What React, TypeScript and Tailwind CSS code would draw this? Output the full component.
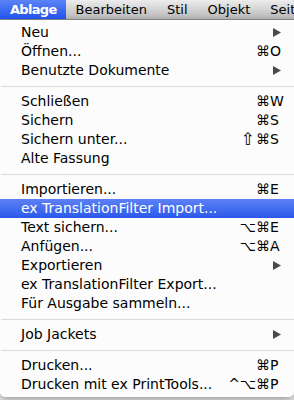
import React from 'react';

type Item =
  | { type: 'sep' }
  | { type: 'item'; label: string; mods?: string; keyChar?: string; submenu?: boolean; selected?: boolean };

const menuItems: Item[] = [
  { type: 'item', label: 'Neu', submenu: true },
  { type: 'item', label: 'Öffnen...', mods: '⌘', keyChar: 'O' },
  { type: 'item', label: 'Benutzte Dokumente', submenu: true },
  { type: 'sep' },
  { type: 'item', label: 'Schließen', mods: '⌘', keyChar: 'W' },
  { type: 'item', label: 'Sichern', mods: '⌘', keyChar: 'S' },
  { type: 'item', label: 'Sichern unter...', mods: '⇧⌘', keyChar: 'S' },
  { type: 'item', label: 'Alte Fassung' },
  { type: 'sep' },
  { type: 'item', label: 'Importieren...', mods: '⌘', keyChar: 'E' },
  { type: 'item', label: 'ex TranslationFilter Import...', selected: true },
  { type: 'item', label: 'Text sichern...', mods: '⌥⌘', keyChar: 'E' },
  { type: 'item', label: 'Anfügen...', mods: '⌥⌘', keyChar: 'A' },
  { type: 'item', label: 'Exportieren', submenu: true },
  { type: 'item', label: 'ex TranslationFilter Export...' },
  { type: 'item', label: 'Für Ausgabe sammeln...' },
  { type: 'sep' },
  { type: 'item', label: 'Job Jackets', submenu: true },
  { type: 'sep' },
  { type: 'item', label: 'Drucken...', mods: '⌘', keyChar: 'P' },
  { type: 'item', label: 'Drucken mit ex PrintTools...', mods: '^⌥⌘', keyChar: 'P' },
];

const menuBar = ['Bearbeiten', 'Stil', 'Objekt', 'Seite'];

const SubArrow = () => (
  <svg width="8" height="9" viewBox="0 0 8 9" className="mr-[2px]">
    <path d="M0 0 L8 4.5 L0 9 Z" fill="#4a4a4a" />
  </svg>
);

// shift glyph renders small in DejaVu, bump it up
const Mods = ({ mods }: { mods: string }) => (
  <span className="flex items-center">
    {mods.split('').map((c, i) =>
      c === '⇧' ? (
        <span key={i} className="text-[17px] leading-none mr-[1px]">
          {c}
        </span>
      ) : (
        <span key={i}>{c}</span>
      )
    )}
  </span>
);

export default function App() {
  return (
    <div
      className="w-[294px] h-[400px] overflow-hidden bg-[#ececec]"
      style={{ fontFamily: '"DejaVu Sans", sans-serif' }}
    >
      {/* Menu bar */}
      <div className="h-[20px] flex items-stretch bg-gradient-to-b from-[#ededed] to-[#b9b9b9] border-b border-[#8c8c8c] text-[13px] text-black whitespace-nowrap">
        <div className="flex items-center pl-[10px] pr-[9px] bg-gradient-to-b from-[#5b82f7] to-[#2252ec] text-white font-bold tracking-[-0.7px]">
          Ablage
        </div>
        {menuBar.map((m) => (
          <div key={m} className="flex items-center px-[10px]">
            {m}
          </div>
        ))}
      </div>

      {/* Dropdown */}
      <div className="bg-[#fcfcfc] pt-[3px] pb-[3px] rounded-b-[5px] shadow-[0_3px_8px_rgba(0,0,0,0.35)] text-[14px] text-black">
        {menuItems.map((it, i) =>
          it.type === 'sep' ? (
            <div key={i} className="h-[12px] flex items-center">
              <div className="h-px w-full bg-[#dadada] ml-[1px]" />
            </div>
          ) : (
            <div
              key={i}
              className={`h-[19px] flex items-center pl-[21px] pr-[11px] whitespace-nowrap ${
                it.selected ? 'bg-gradient-to-b from-[#5d80f5] to-[#2a58eb] text-white' : ''
              }`}
            >
              <span className="flex-1">{it.label}</span>
              {it.keyChar && (
                <span className="flex items-center">
                  {it.mods && <Mods mods={it.mods} />}
                  <span className="w-[13px] text-left">{it.keyChar}</span>
                </span>
              )}
              {it.submenu && <SubArrow />}
            </div>
          )
        )}
      </div>
    </div>
  );
}
